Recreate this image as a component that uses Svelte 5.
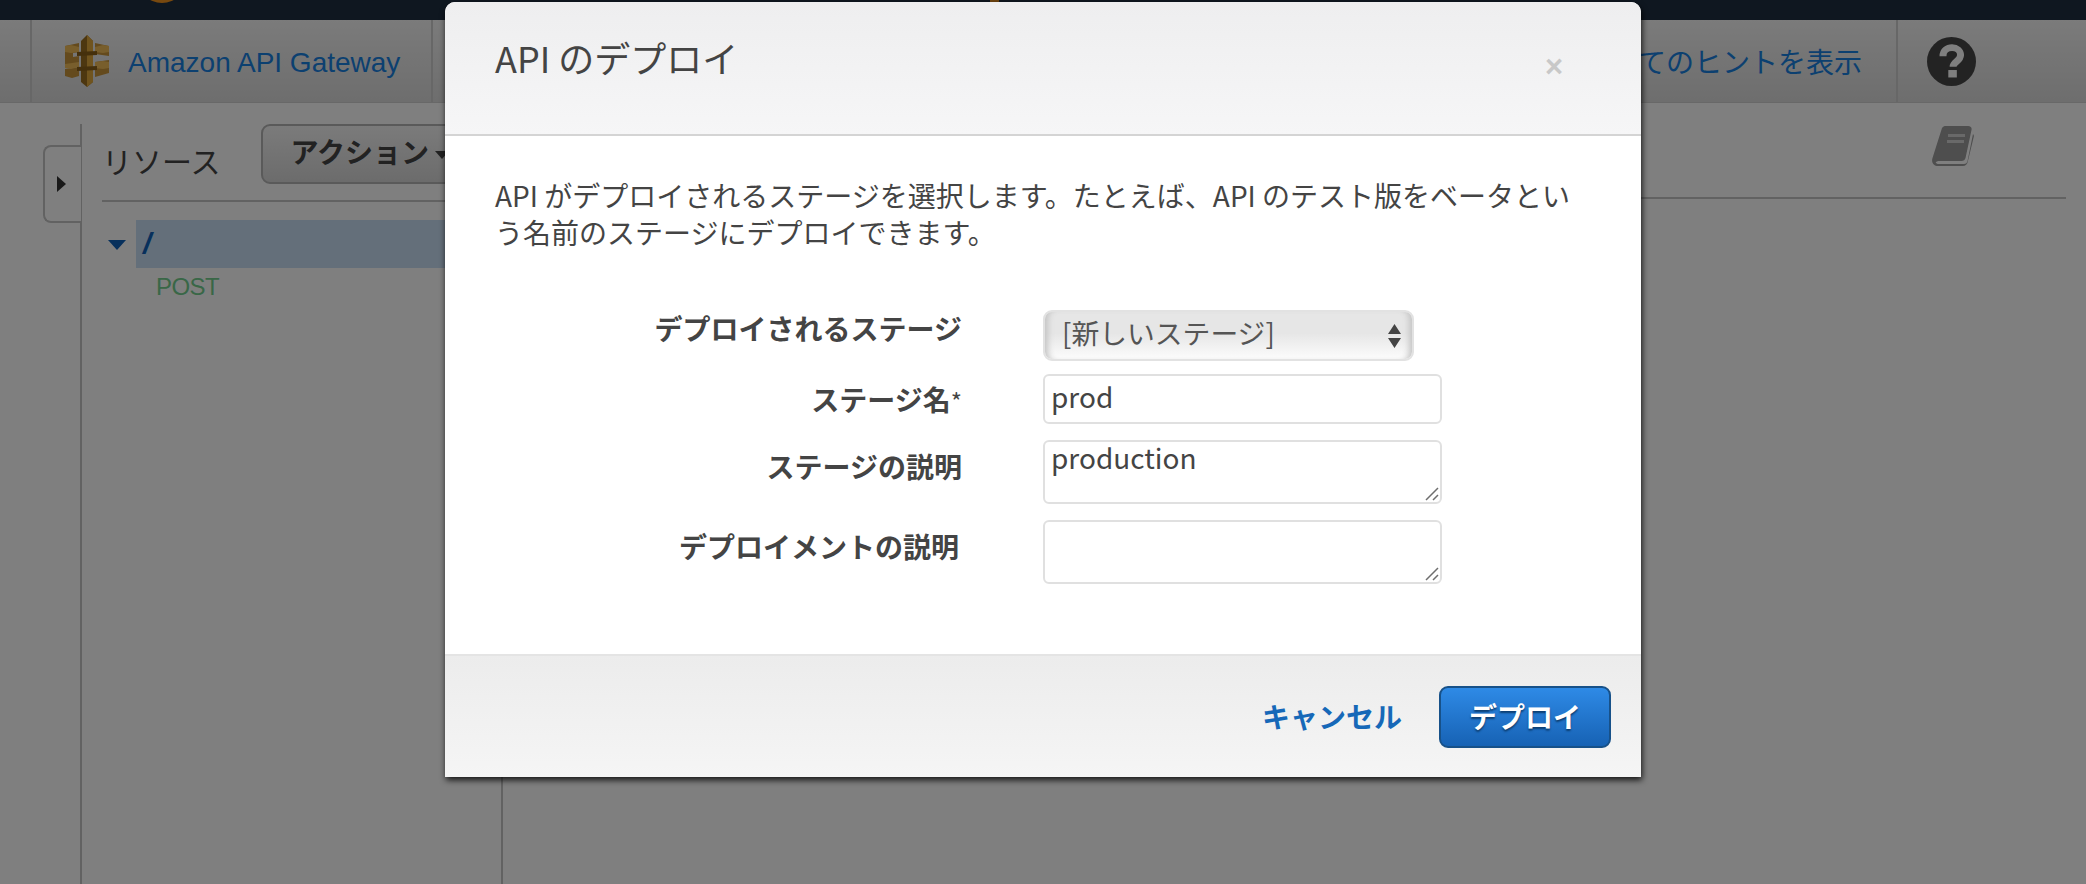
<script>
  let stage = $state('new');
  let stageName = $state('prod');
  let stageDesc = $state('production');
  let deployDesc = $state('');
</script>

{#snippet grip()}
  <svg class="grip" viewBox="0 0 14 14" width="14" height="14" aria-hidden="true">
    <path d="M1 13L13 1M8 13l5-5" stroke="#6e6e6e" stroke-width="1.500" fill="none"/>
  </svg>
{/snippet}

<div class="page">
  <header class="topbar"><span class="awslogo"></span><span class="glow"></span></header>
  <nav class="nav">
    <div class="cell first"></div>
    <div class="cell brand">
      <svg class="gw" viewBox="0 0 44 52" width="44" height="52" aria-hidden="true">
        <path fill="#c8943a" d="M0 11l14-3v9L8 18v4l6-1v9l-14 2zM0 34l14-2v9L7 43l-7-2zM30 8l14 3v10l-14-2zM30 27l14-2v13l-14 4z"/>
        <path fill="#f0bc58" d="M0 11l6-1 8 2v5l-8 1-6-1zM30 12l8-2 6 1v6l-6 1-8-1zM0 29l14-2v5l-8 2-6-1zM30 27l8-1 6 1v6l-6 1-8-1z"/>
        <path fill="#9a6e20" d="M16 6l6-6 6 6v41l-6 5-6-5z"/>
        <path fill="#e0a83c" d="M22 0l6 6v41l-6 5z"/>
        <path fill="#8a6018" d="M12 17l20-1v4l-20 1zM12 32l20-1v4l-20 1z"/>
      </svg>
      <span class="brandtext">Amazon API Gateway</span>
    </div>
    <div class="spacer"></div>
    <div class="cell hints"><span>すべてのヒントを表示</span></div>
    <div class="cell helpcell">
      <svg viewBox="0 0 46 46" width="49" height="49" aria-hidden="true">
        <circle cx="23" cy="23" r="23" fill="#464646"/>
        <path d="M15 18c0-5 4-8 8.500-8s8 3 8 7c0 6-7 6-7 11" fill="none" stroke="#fff" stroke-width="6.500"/>
        <rect x="20" y="31" width="8" height="7" fill="#fff"/>
      </svg>
    </div>
  </nav>
  <main class="content">
    <aside class="rail">
      <div class="tab"><span class="tabarrow"></span></div>
      <div class="railhead">
        <h2>リソース</h2>
        <button class="action">アクション<span class="caret"></span></button>
      </div>
      <div class="tree">
        <div class="rootrow">
          <span class="twisty"></span>
          <div class="selected"><b>/</b></div>
        </div>
        <div class="method">POST</div>
      </div>
    </aside>
    <section class="main">
      <div class="mainhead">
        <svg viewBox="0 0 42 40" width="42" height="40" aria-hidden="true">
          <path fill="#9c9c9c" d="M10 2a4 4 0 0 1 4-2h22c3 0 4 2 3.500 4l-6 28c-.5 2-2 3-4 3H8c-3 0-5 1-4 2s2 1 4 1h24c2 0 3-1 3.500-3L41 8c1 1 1 2 .7 3l-6 25c-.5 2-2 4-5 4H6c-4 0-7-3-5.500-8z"/>
          <rect x="16" y="8" width="17" height="3" fill="#fff" opacity=".55"/>
          <rect x="15" y="14" width="17" height="3" fill="#fff" opacity=".55"/>
        </svg>
      </div>
    </section>
  </main>

  <div class="overlay"></div>

  <div class="modal" role="dialog" aria-label="API のデプロイ">
    <div class="mhead">
      <h1>API のデプロイ</h1>
      <span class="close">×</span>
    </div>
    <div class="mbody">
      <p>API がデプロイされるステージを選択します。たとえば、API のテスト版をベータという名前のステージにデプロイできます。</p>
      <div class="form">
        <label class="l1" for="stage">デプロイされるステージ</label>
        <div class="selectwrap">
          <select id="stage" bind:value={stage}><option value="new">[新しいステージ]</option></select>
          <svg class="updown" viewBox="0 0 13 24" width="13" height="24" aria-hidden="true">
            <path fill="#444" d="M6.500 0L13 10H0zM0 14h13L6.500 24z"/>
          </svg>
        </div>
        <label class="l2" for="sname">ステージ名<small>*</small></label>
        <input id="sname" bind:value={stageName} />
        <label class="l3" for="sdesc">ステージの説明</label>
        <div class="tawrap">
          <textarea id="sdesc" bind:value={stageDesc}></textarea>
          {@render grip()}
        </div>
        <label class="l4" for="ddesc">デプロイメントの説明</label>
        <div class="tawrap">
          <textarea id="ddesc" bind:value={deployDesc}></textarea>
          {@render grip()}
        </div>
      </div>
    </div>
    <div class="mfoot">
      <a class="cancel" href="#cancel">キャンセル</a>
      <button class="deploy">デプロイ</button>
    </div>
  </div>
</div>

<style>
  :global(body) { margin: 0; background: #fff; }
  .page {
    position: relative; width: 2086px; height: 884px; overflow: hidden;
    display: flex; flex-direction: column; background: #fff; color: #444;
    font-family: "Noto Sans CJK JP", "Liberation Sans", sans-serif;
  }
  .topbar { position: relative; height: 20px; background: #1e2e40; overflow: hidden; flex: none; }
  .awslogo { position: absolute; left: 137px; top: -48px; width: 50px; height: 51px; border-radius: 50%; background: #f0921e; }
  .glow { position: absolute; left: 990px; top: 0; width: 9px; height: 3px; background: #e08a20; }
  .nav {
    height: 83px; flex: none; display: flex; align-items: stretch;
    background: linear-gradient(#f6f6f6, #dcdcdc); border-bottom: 1px solid #d0d0d0; box-sizing: border-box;
  }
  .cell { display: flex; align-items: center; border-right: 2px solid #cfcfcf; box-sizing: border-box; }
  .first { width: 32px; }
  .brand { width: 401px; padding-left: 33px; gap: 19px; }
  .brandtext { font-family: "Liberation Sans", sans-serif; font-size: 28px; color: #1880e0; white-space: nowrap; padding-top: 3px; }
  .spacer { flex: 1; }
  .hints { width: 400px; justify-content: flex-end; padding-right: 34px; font-size: 28px; color: #1880e0; white-space: nowrap; }
  .helpcell { width: 188px; border-right: 0; padding-left: 29px; }
  .content { flex: 1; display: flex; min-height: 0; padding-top: 21px; }
  .rail { position: relative; width: 423px; margin-left: 80px; border-left: 2px solid #c4c4c4; box-sizing: border-box; flex: none; border-right: 2px solid #c4c4c4; }
  .tab {
    position: absolute; left: -39px; top: 21px; width: 38px; height: 78px; box-sizing: border-box;
    border: 2px solid #c4c4c4; border-right: 0; border-radius: 8px 0 0 8px; background: #fff;
    display: flex; align-items: center; padding-left: 12px;
  }
  .tabarrow { width: 0; height: 0; border-left: 9px solid #333; border-top: 8px solid transparent; border-bottom: 8px solid transparent; }
  .railhead { display: flex; gap: 40px; align-items: flex-start; margin-left: 20px; height: 78px; box-sizing: border-box; border-bottom: 2px solid #c4c4c4; }
  .railhead h2 { margin: 14px 0 0; flex: none; font-size: 30px; font-weight: 400; line-height: 44px; color: #444; white-space: nowrap; }
  .action {
    width: 300px; height: 60px; flex: none; text-align: left; padding: 0 0 6px 28px; box-sizing: border-box;
    font: 700 28px "Noto Sans CJK JP", sans-serif; color: #444; border: 2px solid #b4b4b4; border-radius: 9px;
    background: linear-gradient(#f6f6f6, #d8d8d8); white-space: nowrap;
  }
  .caret { display: inline-block; margin-left: 6px; vertical-align: middle; border-top: 8px solid #444; border-left: 7px solid transparent; border-right: 7px solid transparent; }
  .tree { margin-left: 26px; padding-top: 18px; }
  .rootrow { display: flex; align-items: center; gap: 10px; }
  .twisty { width: 0; height: 0; border-top: 10px solid #0f60b8; border-left: 9px solid transparent; border-right: 9px solid transparent; margin-top: 2px; }
  .selected { flex: 1; height: 48px; background: #c9dff5; display: flex; align-items: center; padding-left: 7px; }
  .selected b { font: italic 700 30px "Liberation Sans", sans-serif; color: #0f60b8; }
  .method { margin: 4px 0 0 48px; font: 24px/30px "Liberation Sans", sans-serif; color: #72cf8e; letter-spacing: -.6px; }
  .main { flex: 1; }
  .mainhead { height: 75px; margin-right: 20px; border-bottom: 2px solid #c4c4c4; display: flex; justify-content: flex-end; box-sizing: border-box; padding: 2px 92px 0 0; }
  .overlay { position: absolute; inset: 0; background: rgba(0, 0, 0, .5); }

  .modal {
    position: absolute; left: 445px; top: 2px; width: 1196px; height: 775px;
    display: flex; flex-direction: column; background: #fff; border-radius: 10px 10px 0 0; overflow: hidden;
    box-shadow: 1px 3px 6px rgba(0, 0, 0, .85);
  }
  .mhead {
    position: relative; height: 134px; flex: none; box-sizing: border-box; padding: 0 50px;
    background: linear-gradient(#eeeeef, #f6f6f7); border-bottom: 2px solid #d4d4d4;
  }
  .mhead h1 { margin: 0; padding-top: 29px; font-size: 36px; font-weight: 400; line-height: 52px; color: #444; }
  .close { position: absolute; left: 1100px; top: 45px; font: 700 31px/40px "Liberation Sans", sans-serif; color: #c8c8c8; }
  .mbody { flex: 1; padding: 41px 50px 0; box-sizing: border-box; }
  .mbody p { margin: 0; font-size: 28px; line-height: 37px; color: #444; width: 1096px; }
  .form {
    display: grid; grid-template-columns: 467px 399px; column-gap: 81px;
    margin-top: 59px; align-items: start;
  }
  label { font-size: 28px; font-weight: 700; line-height: 40px; text-align: right; color: #444; white-space: nowrap; }
  label small { font-size: 24px; font-weight: 400; }
  .l1 { margin-top: -2px; }
  .l2 { margin-top: 5px; }
  .l3 { margin-top: 6px; }
  .l4 { margin-top: 6px; padding-right: 3px; }
  .selectwrap { position: relative; width: 371px; height: 51px; margin-bottom: 13px; }
  select {
    appearance: none; width: 100%; height: 100%; box-sizing: border-box; padding: 0 0 9px 17px;
    border: 2px solid #e2e2e2; border-radius: 9px; font: 27.800px "Noto Sans CJK JP", sans-serif; color: #555;
    background: linear-gradient(#e6e6e6 45%, #fafafa 95%);
    box-shadow: inset 8px 0 6px -5px #c4c4c4, inset -8px 0 6px -5px #c4c4c4;
  }
  .updown { position: absolute; right: 13px; top: 14px; pointer-events: none; }
  input, textarea {
    display: block; width: 399px; box-sizing: border-box; border: 2px solid #e0e0e0; border-radius: 6px;
    padding: 0 6px; margin: 0; background: #fff; color: #444; font: 28px "Noto Sans CJK JP", sans-serif; outline: none;
  }
  input { height: 50px; margin-bottom: 16px; padding-bottom: 6px; }
  .tawrap { position: relative; height: 64px; margin-bottom: 16px; }
  textarea { height: 64px; line-height: 36px; padding-top: 0; resize: none; margin-top: 0; }
  #sdesc { line-height: 30px; }
  .grip { position: absolute; right: 3px; bottom: 3px; pointer-events: none; }
  .mfoot {
    height: 123px; flex: none; box-sizing: border-box; padding: 30px 30px 0 0;
    display: flex; justify-content: flex-end; align-items: flex-start; gap: 37px;
    background: linear-gradient(#ececec, #f5f5f5); border-top: 2px solid #e4e4e4;
  }
  .cancel { font-size: 28px; font-weight: 700; line-height: 60px; color: #1668b8; text-decoration: none; }
  .deploy {
    width: 172px; height: 62px; box-sizing: border-box; border: 2px solid #175189; border-radius: 9px;
    font: 700 28px "Noto Sans CJK JP", sans-serif; color: #fff; text-shadow: 0 2px 2px #0b3d70;
    background: linear-gradient(#2e8ae6, #1762b4); padding: 0 0 2px;
  }
</style>
